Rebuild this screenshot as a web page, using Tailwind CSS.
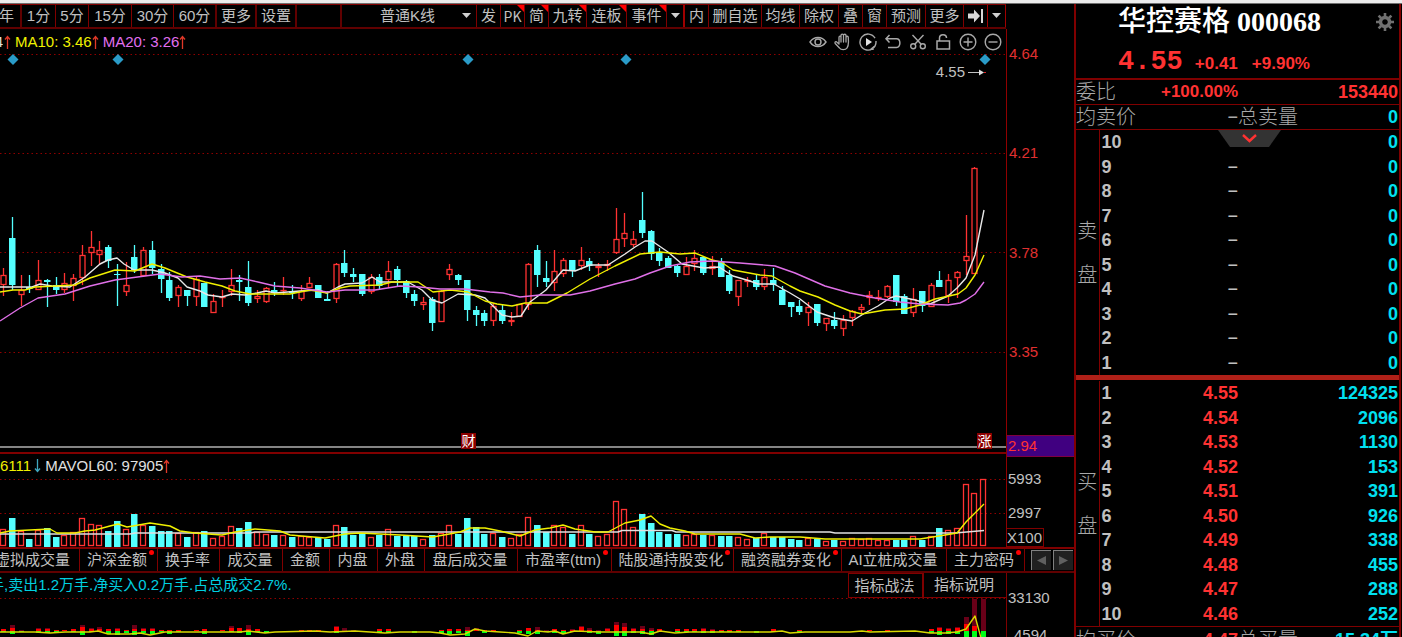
<!DOCTYPE html>
<html lang="zh-CN">
<head>
<meta charset="utf-8">
<meta name="viewport" content="width=device-width, initial-scale=1">
<title>华控赛格 000068</title>
<script src="https://cdn.jsdelivr.net/npm/@tailwindcss/browser@4"></script>
</head>
<body class="bg-black text-[#c0c0c0] font-['Liberation_Sans','Noto_Sans_CJK_SC',sans-serif] text-[15px] leading-5 overflow-hidden">
<div class="flex h-screen flex-col overflow-hidden">
  <div class="h-[4px] shrink-0 border-b border-[#707070] bg-[#ececec]"></div>
  <div class="flex min-h-0 flex-1">

    <!-- Chart area -->
    <main class="flex min-w-0 flex-1 flex-col">
      <div class="flex h-[25px] shrink-0">
        <nav class="flex min-w-0 flex-1 border-t border-b-2 border-t-[#800000] border-b-[#600000] whitespace-nowrap" aria-label="周期">
          <button class="flex w-[22px] shrink-0 items-center justify-end overflow-hidden border-r-2 border-[#600000] pr-[6px]">年</button>
          <button class="w-[34px] shrink-0 border-r border-[#800000]">1分</button>
          <button class="w-[33px] shrink-0 border-r border-[#800000]">5分</button>
          <button class="w-[43px] shrink-0 border-r border-[#800000]">15分</button>
          <button class="w-[42px] shrink-0 border-r border-[#800000]">30分</button>
          <button class="w-[43px] shrink-0 border-r-2 border-[#600000]">60分</button>
          <button class="w-[40px] shrink-0 border-r-2 border-[#600000]">更多</button>
          <button class="w-[40px] shrink-0 border-r-2 border-[#600000]">设置</button>
          <div class="flex-1 border-r-2 border-[#600000]"></div>
          <div class="relative w-[135px] shrink-0 border-r border-[#800000]">
            <select aria-label="K线类型" class="block h-full w-full appearance-none bg-black pl-[38px] leading-5 text-[#c0c0c0]"><option>普通K线</option></select>
            <svg class="pointer-events-none absolute top-[8px] right-[5px]" width="9" height="6"><path d="M0 0h9L4.500 5z" fill="#d0d0d0"/></svg>
          </div>
          <button class="w-[24px] shrink-0 border-r border-[#800000]">发</button>
          <button class="relative w-[24px] shrink-0 border-r border-[#800000] font-['Noto_Sans_CJK_SC',sans-serif] text-[14px]">PK<svg class="absolute top-0 right-0" width="7" height="7"><path d="M0 0h7v7z" fill="#f00"/></svg></button>
          <button class="relative w-[24px] shrink-0 border-r border-[#800000]">简<svg class="absolute top-0 right-0" width="7" height="7"><path d="M0 0h7v7z" fill="#f00"/></svg></button>
          <button class="relative w-[38px] shrink-0 border-r border-[#800000]">九转<svg class="absolute top-0 right-0" width="7" height="7"><path d="M0 0h7v7z" fill="#f00"/></svg></button>
          <button class="relative w-[40px] shrink-0 border-r border-[#800000]">连板<svg class="absolute top-0 right-0" width="7" height="7"><path d="M0 0h7v7z" fill="#f00"/></svg></button>
          <button class="relative w-[40px] shrink-0 border-r border-[#800000]">事件<svg class="absolute top-0 right-0" width="7" height="7"><path d="M0 0h7v7z" fill="#f00"/></svg></button>
          <button class="flex w-[18px] shrink-0 items-center justify-center border-r-2 border-[#a00000]" aria-label="事件菜单"><svg width="9" height="6"><path d="M0 0h9L4.500 5z" fill="#d0d0d0"/></svg></button>
          <button class="w-[24px] shrink-0 border-r border-[#800000]">内</button>
          <button class="w-[53px] shrink-0 border-r border-[#800000]">删自选</button>
          <button class="w-[38px] shrink-0 border-r border-[#800000]">均线</button>
          <button class="w-[39px] shrink-0 border-r border-[#800000]">除权</button>
          <button class="w-[24px] shrink-0 border-r border-[#800000]">叠</button>
          <button class="w-[24px] shrink-0 border-r border-[#800000]">窗</button>
          <button class="w-[39px] shrink-0 border-r border-[#800000]">预测</button>
          <button class="w-[38px] shrink-0 border-r border-[#800000]">更多</button>
          <button class="flex w-[24px] shrink-0 items-center justify-center border-r border-[#a00000]" aria-label="移到最新"><svg width="17" height="16"><path d="M1 5.500h6V1.500L13 8l-6 6.500v-4H1z" fill="#d8d8d8"/><path d="M15 1v14" stroke="#d8d8d8" stroke-width="2"/></svg></button>
          <button class="flex w-[18px] shrink-0 items-center justify-center border-r border-[#a00000]" aria-label="更多工具"><svg width="9" height="6"><path d="M0 0h9L4.500 5z" fill="#d0d0d0"/></svg></button>
        </nav>
        <div class="w-[68px] shrink-0"></div>
      </div>

      <div class="flex min-h-0 flex-1">
        <div class="flex min-w-0 flex-1 flex-col">
          <!-- Candlestick chart -->
          <section class="relative flex min-h-0 flex-1 flex-col border-b-2 border-[#800000]">
            <header class="flex h-[25px] shrink-0 items-center justify-between">
              <div class="flex items-center whitespace-nowrap">
                <span class="flex w-[3px] justify-end overflow-hidden text-[#e0e0e0]">4</span>
                <svg class="mr-[4px] ml-[1px]" width="7" height="14"><use href="#up"/></svg>
                <span class="text-[#f0f000]">MA10: 3.46</span>
                <svg class="mr-[4px]" width="7" height="14"><use href="#up"/></svg>
                <span class="text-[#e070f0]">MA20: 3.26</span>
                <svg width="7" height="14"><use href="#up"/></svg>
              </div>
              <div class="mr-[4px] flex items-center gap-[7px] text-[#a8a8a8]">
                <button aria-label="显示"><svg width="18" height="18" fill="none" stroke="currentColor" stroke-width="1.400"><path d="M1 9C5 3 13 3 17 9 13 15 5 15 1 9z"/><circle cx="9" cy="9" r="3"/></svg></button>
                <button aria-label="拖动"><svg width="18" height="18" fill="none" stroke="currentColor" stroke-width="1.300" stroke-linejoin="round" stroke-linecap="round"><path d="M5 11V4.500c0-1.800 2-1.800 2 0V9 2.500c0-1.800 2.500-1.800 2.500 0V9 2.500c0-1.700 2.500-1.700 2.500 0V9 4.500c0-1.700 2.300-1.700 2.300 0 0 4 1 7.500-1.300 10.500-1.500 2.200-6 2.200-7.500 0L1.200 10.500C.5 9 2 8 3 9.200z"/></svg></button>
                <button aria-label="回放"><svg width="18" height="18" fill="none" stroke="currentColor" stroke-width="1.400"><path d="M16 5.200A8 8 0 1 0 17 9v-1M16.500 12.500 14 15M11.500 16.500l2.500-2v2.500"/><path d="M7 5v8l6-4z" fill="#e0e0e0" stroke="none"/></svg></button>
                <button aria-label="撤销"><svg width="18" height="18" fill="none" stroke="currentColor" stroke-width="1.500"><path d="M5.500 2 2 5.700 5.500 9.400M2 5.700h10.500c4.500 0 4.500 8.800 0 8.800H4"/></svg></button>
                <button aria-label="剪切"><svg width="18" height="18" fill="none" stroke="currentColor" stroke-width="1.400"><circle cx="4.200" cy="13.300" r="2.500"/><circle cx="13.800" cy="13.300" r="2.500"/><path d="M3.500 2 12.200 11.300M14.500 2 5.800 11.300"/></svg></button>
                <button aria-label="锁定"><svg width="18" height="18" fill="none" stroke="currentColor" stroke-width="1.500"><path d="M3 8h12.500v8H3zM5.500 8V5c0-4.500 7-4.500 7 0"/></svg></button>
                <button aria-label="放大"><svg width="18" height="18" fill="none" stroke="currentColor" stroke-width="1.400"><circle cx="9" cy="9" r="7.800"/><path d="M4.500 9h9M9 4.500v9"/></svg></button>
                <button aria-label="缩小"><svg width="18" height="18" fill="none" stroke="currentColor" stroke-width="1.400"><circle cx="9" cy="9" r="7.800"/><path d="M4.500 9h9"/></svg></button>
              </div>
            </header>
            <svg id="kline" class="block min-h-0 w-full flex-1" viewBox="0 54 1006 398" preserveAspectRatio="none"></svg>
            <div class="absolute top-[33px] right-[20px] flex items-center gap-[3px]">4.55<svg width="18" height="7"><path d="M0 3.500h12" stroke="#c0c0c0"/><path d="M11 0.500l5 3L11 6.500z" fill="#e0e0e0"/><path d="M16 3.500h2" stroke="#e02020"/></svg></div>
            <span class="absolute bottom-[3px] left-[461px] flex h-[16px] w-[15px] items-center justify-center bg-[#8b0000] text-[14px] leading-4 text-white">财</span>
            <span class="absolute right-[14px] bottom-[3px] flex h-[16px] w-[15px] items-center justify-center bg-[#8b0000] text-[14px] leading-4 text-white">涨</span>
          </section>
          <!-- Volume chart -->
          <section class="flex h-[93px] shrink-0 flex-col">
            <header class="flex h-[23px] shrink-0 items-center whitespace-nowrap">
              <span class="text-[#f0f000]">6111</span>
              <svg class="mr-[4px] ml-[3px]" width="7" height="14"><path d="M3.500 0v12M1 9.500l2.500 3 2.500-3" fill="none" stroke="#40a8c0" stroke-width="1.300"/></svg>
              <span class="text-[#e0e0e0]">MAVOL60: 97905</span>
              <svg width="7" height="14"><use href="#up"/></svg>
            </header>
            <svg id="volume" class="block min-h-0 w-full flex-1" viewBox="0 477 1006 70" preserveAspectRatio="none"></svg>
          </section>
        </div>
        <!-- Price and volume axis -->
        <aside class="flex w-[68px] shrink-0 flex-col border-l border-[#900000] pt-[15px]">
          <div class="h-[99px] pl-[2px] text-[#e03030]">4.64</div>
          <div class="h-[100px] pl-[2px] text-[#e03030]">4.21</div>
          <div class="h-[99px] pl-[2px] text-[#e03030]">3.78</div>
          <div class="pl-[2px] text-[#e03030]">3.35</div>
          <div class="flex-1"></div>
          <div class="h-[22px] border-y border-[#800040] bg-[#400080] pl-[1px] text-[#ff3232]">2.94</div>
          <div class="mt-[12px] pl-[1px]">5993</div>
          <div class="mt-[14px] pl-[1px]">2997</div>
          <div class="mt-[5px] h-[19px] w-[37px] border border-l-0 border-[#800000] leading-[18px]">X100</div>
        </aside>
      </div>

      <!-- Indicator tabs -->
      <nav class="flex h-[26px] shrink-0 border-y-2 border-t-[#800000] border-b-[#600000] whitespace-nowrap" aria-label="指标">
        <button class="flex w-[80px] shrink-0 items-center justify-end overflow-hidden border-r border-[#800000] pr-[9px]">虚拟成交量</button>
        <button class="relative w-[78px] shrink-0 border-r border-[#800000] pr-[3px]">沪深金额<i class="absolute top-[1px] right-[3px] size-[5px] rounded-full bg-[#f00]"></i></button>
        <button class="w-[62px] shrink-0 border-r border-[#800000] pr-[2px]">换手率</button>
        <button class="w-[63px] shrink-0 border-r border-[#800000] pr-[2px]">成交量</button>
        <button class="w-[47px] shrink-0 border-r border-[#800000] pr-[2px]">金额</button>
        <button class="w-[48px] shrink-0 border-r border-[#800000] pr-[2px]">内盘</button>
        <button class="w-[47px] shrink-0 border-r border-[#800000] pr-[2px]">外盘</button>
        <button class="w-[93px] shrink-0 border-r border-[#800000] pr-[2px]">盘后成交量</button>
        <button class="relative w-[94px] shrink-0 border-r border-[#800000] pr-[3px]">市盈率(ttm)<i class="absolute top-[1px] right-[3px] size-[5px] rounded-full bg-[#f00]"></i></button>
        <button class="relative w-[122px] shrink-0 border-r border-[#800000] pr-[3px]">陆股通持股变化<i class="absolute top-[1px] right-[3px] size-[5px] rounded-full bg-[#f00]"></i></button>
        <button class="relative w-[108px] shrink-0 border-r border-[#800000] pr-[3px]">融资融券变化<i class="absolute top-[1px] right-[3px] size-[5px] rounded-full bg-[#f00]"></i></button>
        <button class="w-[105px] shrink-0 border-r border-[#800000] pr-[2px]">AI立桩成交量</button>
        <button class="relative w-[78px] shrink-0 border-r border-[#800000] pr-[3px]">主力密码<i class="absolute top-[1px] right-[3px] size-[5px] rounded-full bg-[#f00]"></i></button>
        <div class="flex flex-1 items-center justify-end gap-[2px] pr-[1px]">
          <button class="flex size-5 items-center justify-center border-t border-l border-[#808080] bg-[#202020]" aria-label="上一组"><svg width="9" height="9"><path d="M9 0v9L0 4.500z" fill="#606060"/></svg></button>
          <button class="flex size-5 items-center justify-center border-t border-l border-[#808080] bg-[#202020]" aria-label="下一组"><svg width="9" height="9"><path d="M0 0v9L9 4.500z" fill="#606060"/></svg></button>
        </div>
      </nav>

      <!-- Money-flow indicator -->
      <div class="flex h-[64px] shrink-0">
        <section class="flex min-w-0 flex-1 flex-col">
          <header class="flex h-[25px] shrink-0 items-start justify-between whitespace-nowrap">
            <div class="flex pt-[2px] text-[#00d0e0]"><span class="flex w-[4px] justify-end overflow-hidden">手</span><span>,卖出1.2万手.净买入0.2万手.占总成交2.7%.</span></div>
            <div class="flex h-full">
              <button class="w-[76px] border border-r-2 border-[#800000] pr-[2px]">指标战法</button>
              <button class="w-[82px] border-b border-[#800000] pr-[2px]">指标说明</button>
            </div>
          </header>
          <svg id="flow" class="block min-h-0 w-full flex-1" viewBox="0 598 1006 39" preserveAspectRatio="none"></svg>
        </section>
        <aside class="flex w-[68px] shrink-0 flex-col gap-[17px] overflow-hidden border-l border-[#800000] pt-[15px]">
          <div class="pl-[1px]">33130</div>
          <div class="pl-[7px]">4594</div>
        </aside>
      </div>
    </main>

    <!-- Quote panel -->
    <aside class="mr-[1px] flex w-[327px] shrink-0 flex-col overflow-hidden border-r-2 border-l-2 border-[#800000]">
      <header class="relative h-[74px] shrink-0 pl-[42px]">
        <h1 class="pt-[2px] font-['Liberation_Serif','Noto_Sans_CJK_SC',serif] text-[28px] leading-8 font-bold text-white"><span class="font-medium">华控赛格</span> 000068</h1>
        <button class="absolute top-[8px] right-[4px]" aria-label="设置"><svg width="20" height="20" viewBox="-10 -10 20 20"><circle r="4.500" fill="none" stroke="#707070" stroke-width="3.400"/><path d="M0-9V-5M0 9V5M-9 0H-5M9 0H5M-6.400-6.400-4-4M6.400 6.400 4 4M-6.400 6.400-4 4M6.400-6.400 4-4" stroke="#707070" stroke-width="2.600"/></svg></button>
        <div class="flex items-baseline pt-[2px] text-[17px] font-bold text-[#ff3232]">
          <span class="font-['Liberation_Mono',monospace] text-[27px] leading-[44px]">4.55</span>
          <span class="ml-[12px]">+0.41</span>
          <span class="ml-[14px]">+9.90%</span>
        </div>
      </header>
      <div class="flex h-[27px] shrink-0 items-center border-t-2 border-b border-[#800000] pr-[1px] font-bold text-[#ff3232]">
        <span class="w-[60px] text-[20px] font-light text-[#a8a8a8]">委比</span>
        <span class="w-[102px] text-right text-[17px]">+100.00%</span>
        <span class="flex-1 text-right text-[18px]">153440</span>
      </div>
      <div class="flex h-[25px] shrink-0 items-center border-b border-[#800000] pr-[1px] text-[20px] font-light text-[#a8a8a8]">
        <span class="w-[60px]">均卖价</span>
        <span class="w-[102px] text-right text-[18px]">−</span>
        <span class="w-[70px]">总卖量</span>
        <span class="flex-1 text-right text-[18px] font-bold text-[#00e0f0]">0</span>
      </div>
      <div class="relative shrink-0 border-b-[5px] border-[#b02018]">
        <table id="asks" class="h-[245px] w-full border-collapse text-[18px] leading-5 font-bold"></table>
        <button class="absolute top-0 left-[142px]" aria-label="展开"><svg width="63" height="17"><path d="M0 0h63L51 17H12z" fill="#333"/><path d="M25 5l6.500 6L38 5" fill="none" stroke="#ff3232" stroke-width="2.400"/></svg></button>
      </div>
      <div class="shrink-0 border-b border-[#800000] pt-[1px]">
        <table id="bids" class="h-[245px] w-full border-collapse text-[18px] leading-5 font-bold"></table>
      </div>
      <div class="flex h-[25px] shrink-0 items-center pr-[1px] text-[20px] font-light text-[#a8a8a8]">
        <span class="w-[60px]">均买价</span>
        <span class="w-[102px] text-right text-[18px] font-bold text-[#ff3232]">4.47</span>
        <span class="w-[70px]">总买量</span>
        <span class="flex-1 text-right text-[18px] font-bold text-[#00e0f0]">15.34万</span>
      </div>
    </aside>
  </div>
</div>
<svg width="0" height="0" class="absolute"><defs><path id="up" d="M3.500 14V2M1 4.500l2.500-3 2.500 3" fill="none" stroke="#e03828" stroke-width="1.300"/></defs></svg>

<script>
const RED = '#ff3232', CYAN = '#54ffff';
const cx = i => Math.round(3 + 8.75 * i);

// r = rising, c = falling; then high, body top, body bottom, low
const candles = `r268,275,284,296 c217,238,285,290 r275,290,294,306 c275,287,289,293 r260,280,289,290 c279,280,282,307 c277,285,290,294 r273,283,289,293 r274,278,285,301 r245,255,277,285 r231,247,252,266 r241,250,254,265 c245,247,261,268 c264,274,275,306 r262,285,291,296 c245,257,270,273 r247,250,275,277 c241,250,268,274 c264,269,279,293 c272,280,298,301 r285,287,295,307 c290,290,296,306 r277,279,296,306 c283,283,307,307 r294,301,312,312 r290,297,297,307 r269,285,291,296 c275,280,282,301 c261,287,303,306 r290,296,298,303 r287,288,301,303 c282,290,293,296 r277,290,290,295 c285,291,293,299 r285,291,298,301 r277,283,287,288 c285,285,298,298 c291,299,301,301 r263,264,298,303 c250,263,273,277 c268,274,277,282 c274,274,294,296 r274,277,291,294 c274,277,286,289 r261,271,279,288 c266,269,280,286 c280,281,293,298 c290,294,301,306 r297,302,304,310 c297,299,323,331 r290,291,321,321 r264,269,274,280 c274,275,280,285 c280,280,310,321 c306,310,315,326 c310,313,321,326 r303,306,320,326 c304,310,321,324 r312,320,321,326 r304,304,316,316 r263,264,304,310 c245,250,275,287 c261,278,282,287 r250,271,282,291 r258,260,273,277 c260,260,271,277 r247,260,265,270 c258,261,266,271 r263,266,267,277 r260,264,265,271 r208,239,252,254 r213,233,238,247 r231,239,244,247 c192,220,233,238 c230,231,254,260 c248,252,261,266 c256,258,268,268 c265,266,273,277 r257,266,274,274 r250,258,263,271 c257,257,273,275 r256,266,268,275 c258,262,277,277 c270,275,291,294 r280,280,296,306 r277,280,281,287 c274,280,287,290 r269,277,286,290 c268,280,285,291 c286,290,305,305 c302,302,307,317 c300,306,312,315 r302,307,312,326 c304,304,323,326 r318,318,323,331 c312,320,326,329 r315,320,328,336 r310,311,317,326 r304,307,309,314 r291,295,297,305 r290,297,298,301 r285,286,296,298 c275,275,302,306 c294,296,314,314 r288,299,312,317 c291,291,306,312 r283,285,306,307 c271,280,287,287 r274,280,295,303 r271,272,277,298 r215,256,260,275 r167,168,273,273`
  .split(' ').map(s => [s[0], ...s.slice(1).split(',').map(Number)]);

const volumes = [529,518,531,539,530,528,537,535,532,518,524,525,531,521,529,514,525,526,531,531,533,537,532,531,538,536,526,528,522,532,534,535,535,537,536,537,537,539,525,527,535,533,537,535,529,536,536,536,539,535,533,525,534,518,527,534,533,537,538,534,517,525,532,525,527,534,525,534,536,534,501,509,527,514,523,532,534,534,535,534,535,535,536,536,537,539,538,533,537,537,539,540,538,539,541,540,541,538,539,538,540,540,540,540,536,540,536,528,530,528,484,493,479];

const grid = ys => ys.map(y => `<path d="M0 ${y}.5H1006" stroke="#900000" stroke-dasharray="1.500 3"/>`).join('');
const line = (pts, color) => `<polyline points="${pts}" fill="none" stroke="${color}" stroke-width="1.400" stroke-linejoin="round"/>`;

let k = grid([54, 153, 252, 352]);
candles.forEach(([t, h, a, b, l], i) => {
  const x = cx(i);
  if (t === 'c') {
    k += `<path d="M${x + .5} ${h}V${l}" stroke="${CYAN}" stroke-width="1.300"/><rect x="${x - 3}" y="${a}" width="6.500" height="${Math.max(b - a, 1)}" fill="${CYAN}"/>`;
  } else {
    k += `<path d="M${x + .5} ${h}V${a}M${x + .5} ${b}V${l}" stroke="${RED}" stroke-width="1.300"/><rect x="${x - 2}" y="${a + .5}" width="5" height="${Math.max(b - a, 0.1)}" fill="none" stroke="${RED}" stroke-width="1.300"/>`;
  }
});
k += line('0,287 32,287 40,284 52,286 70,287 85,277 100,264 108,260 117,258 124,264 134,270 152,270 165,273 178,278 187,287 200,291 208,295 222,297 232,294 245,295 257,293 266,291 275,293 300,291 318,290 327,293 338,287 345,284 362,283 372,277 380,282 408,282 422,290 432,300 442,303 458,294 475,295 485,298 494,307 502,315 512,317 521,316 530,302 546,290 563,270 575,271 590,265 608,265 625,254 635,247 645,241 652,241 668,252 682,264 704,268 719,267 733,276 750,281 758,284 774,284 790,293 800,299 817,312 835,318 852,321 865,313 878,306 890,298 896,296 915,300 930,304 948,296 957,288 966,278 975,255 984,210', '#e8e8e8');
k += line('0,292 13,290 25,290 35,287 75,285 90,278 115,270 135,271 152,264 165,268 187,277 205,282 222,286 235,291 250,294 290,294 310,290 327,293 340,288 350,286 380,285 392,282 418,282 433,292 450,290 468,292 485,301 497,304 512,306 525,303 547,303 567,293 590,279 615,266 640,254 660,252 680,254 695,253 712,260 721,262 733,270 760,275 772,276 790,286 800,291 818,297 835,305 850,311 862,314 885,310 905,309 920,305 935,299 958,294 966,288 975,275 984,255', '#f0f000');
k += line('0,321 20,308 38,298 65,294 90,286 115,280 145,276 160,274 182,277 200,276 220,279 240,278 258,282 275,286 300,288 327,292 345,290 375,290 400,286 420,287 440,289 465,289 490,292 503,293 520,297 540,295 570,295 590,291 615,284 635,279 650,273 670,266 690,262 712,261 740,263 775,266 795,273 825,286 850,293 875,298 900,302 920,304 948,305 960,303 966,300 975,294 984,282', '#e070e8');
[13, 118, 468, 626, 985].forEach(x => { k += `<path d="M${x} 54l5.500 5.500-5.500 5.500-5.500-5.500z" fill="#2a9bc8"/>`; });
k += '<path d="M0 447H1006" stroke="#b0b0b0" stroke-width="1.600"/>';
document.getElementById('kline').innerHTML = k;

let v = grid([479, 513]);
volumes.forEach((y, i) => {
  const x = cx(i), falling = candles[i] && candles[i][0] === 'c';
  v += falling
    ? `<rect x="${x - 3}" y="${y}" width="6.500" height="${547 - y}" fill="${CYAN}"/>`
    : `<rect x="${x - 2.5}" y="${y + .5}" width="5" height="${545 - y}" fill="none" stroke="${RED}" stroke-width="1.300"/>`;
});
v += line('0,534 130,534 135,533 250,533 255,532 618,532 622,530.5 672,530.5 676,532 830,532 835,533 955,533 984,530.5', '#e0e0e0');
v += line('0,533 10,531 30,530 50,529 57,533 75,533 85,531 95,530 110,526 118,524 127,527 150,523 170,526 180,531 195,533 222,535 235,532 255,529 280,531 290,535 325,538 345,534 360,533 400,535 433,537 460,532 470,528 485,528 500,531 520,536 535,530 550,528 563,525 575,529 595,532 608,532 625,523 640,520 651,516 660,524 670,528 685,531 695,534 740,534 755,538 770,537 800,537 825,539 920,539 945,535 957,533 966,522 984,504', '#f0f000');
document.getElementById('volume').innerHTML = v;

// Heights above the base line: dark red, red; and below it: green
const flow = {0:[0,2,1],1:[3,3,3],2:[1,0,1],4:[1,2,2],5:[1,2,2],6:[0,1,1],7:[0,1,0],8:[0,2,1],9:[2,4,4],10:[1,2,1],11:[2,2,0],12:[0,2,3],13:[1,2,4],14:[0,1,2],15:[4,2,4],16:[1,2,2],17:[1,2,3],18:[0,1,1],19:[0,1,3],20:[0,1,1],22:[0,1,0],23:[0,2,3],25:[0,1,0],26:[2,3,1],27:[0,3,2],28:[4,2,4],29:[0,2,1],30:[0,0,2],34:[0,1,0],35:[0,1,0],36:[0,1,1],38:[1,4,2],39:[3,0,1],40:[1,0,1],43:[0,2,1],44:[0,2,2],47:[0,0,2],50:[0,1,2],51:[0,2,3],52:[0,2,2],53:[3,1,5],54:[1,2,0],55:[0,1,2],56:[0,1,1],59:[0,1,2],60:[0,3,3],61:[3,1,3],62:[1,0,1],63:[0,2,2],64:[0,1,3],65:[1,1,1],66:[1,4,0],67:[2,1,2],68:[1,0,3],69:[1,2,0],70:[3,6,5],71:[4,4,5],72:[1,2,2],73:[3,2,3],74:[2,1,4],75:[0,2,1],77:[0,2,1],78:[0,2,1],79:[0,2,1],80:[1,2,2],81:[1,1,2],82:[0,1,1],83:[0,1,1],84:[0,1,1],86:[0,0,2],88:[0,2,1],91:[0,1,2],99:[0,1,0],101:[0,1,1],106:[0,2,2],107:[1,3,4],108:[1,2,3],109:[1,3,3],110:[7,7,6],111:[27,5,6],112:[32,0,6]};
let f = grid([598]);
for (const [i, [d, r, g]] of Object.entries(flow)) {
  const x = cx(+i) - 2, base = 631;
  f += `<rect x="${x}" y="${base - r - d}" width="5" height="${d}" fill="#680018"/><rect x="${x}" y="${base - r}" width="5" height="${r}" fill="#f00"/><rect x="${x}" y="${base}" width="5" height="${g}" fill="#00ff18"/>`;
}
f += line('0,632 35,632 50,633 65,632 90,632 98,631 108,634 130,634 140,633 150,635 165,632 240,632 248,631 256,632 265,633 275,632 315,631 330,632 355,631 385,633 400,632 430,632 440,633 450,635 465,634 475,629 485,631 500,632 515,633 528,636 537,631 548,632 555,631 563,634 575,631 600,632 625,632 640,632 651,634 660,631 675,633 690,632 770,632 782,631 790,633 805,632 850,632 862,631 870,632 915,631 930,633 945,633 957,632 966,629 975,616 981,638', '#d8d800');
document.getElementById('flow').innerHTML = f;

// Order book
function book(id, label, rows, color) {
  document.getElementById(id).innerHTML = rows.map(([n, p, q], i) => `<tr>
    ${i ? '' : `<th rowspan="10" scope="rowgroup" class="w-[23px] border-r border-[#800000] p-0 text-center text-[20px] leading-[44px] font-light text-[#a8a8a8]">${label.split('').join('<br>')}</th>`}
    <th scope="row" class="w-[40px] p-0 pl-[2px] text-left">${n}</th>
    <td class="w-[99px] p-0 text-right ${color}">${p}</td>
    <td class="p-0 pr-[1px] text-right text-[#00e0f0]">${q}</td></tr>`).join('');
}
book('asks', '卖盘', [10, 9, 8, 7, 6, 5, 4, 3, 2, 1].map(n => [n, n === 10 ? '' : '−', 0]), 'font-normal text-[#c0c0c0]');
book('bids', '买盘', [[1, '4.55', 124325], [2, '4.54', 2096], [3, '4.53', 1130], [4, '4.52', 153], [5, '4.51', 391], [6, '4.50', 926], [7, '4.49', 338], [8, '4.48', 455], [9, '4.47', 288], [10, '4.46', 252]], 'text-[#ff3232]');
</script>
</body>
</html>
